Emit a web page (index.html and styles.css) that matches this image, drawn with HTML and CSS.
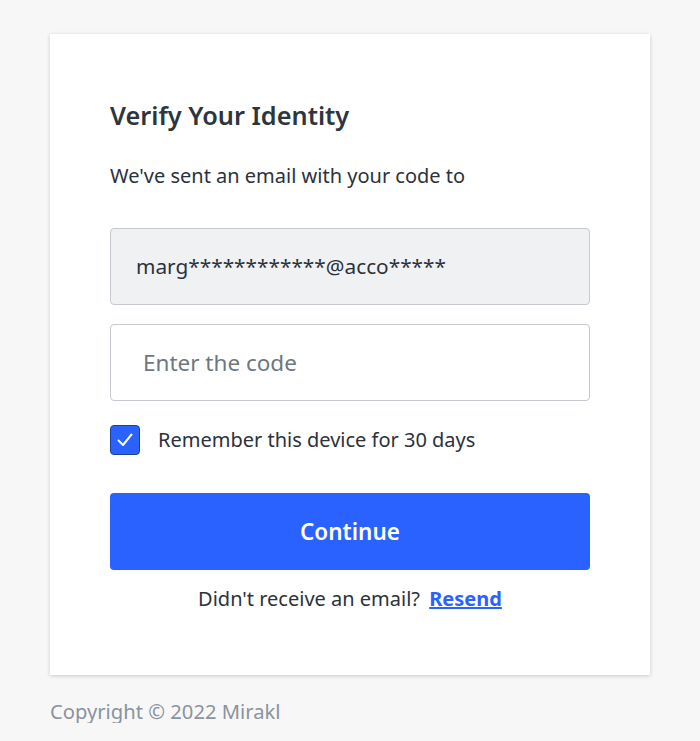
FILE: index.html
```html
<!DOCTYPE html>
<html lang="en">
<head>
  <meta charset="UTF-8" />
  <meta name="viewport" content="width=device-width, initial-scale=1.0"/>
  <title>Verify Your Identity</title>
  <link rel="stylesheet" href="styles.css">
</head>
<body>
  <div class="page">
    <div class="card">
      <h1>Verify Your Identity</h1>
      <p class="intro">We've sent an email with your code to</p>

      <div class="field field-readonly">marg************@acco*****</div>
      <input type="text" class="field field-code" placeholder="Enter the code">

      <label class="remember">
        <span class="checkbox">
          <svg width="20" height="20" viewBox="0 0 20 20"><path d="M3.5 10.5 L8 15 L16.5 4.5" fill="none" stroke="#fff" stroke-width="2" stroke-linecap="round" stroke-linejoin="round"/></svg>
        </span>
        Remember this device for 30 days
      </label>

      <button class="continue">Continue</button>

      <p class="resend">Didn't receive an email? <a href="#">Resend</a></p>
    </div>
    <p class="copyright">Copyright © 2022 Mirakl</p>
  </div>
</body>
</html>
```

FILE: styles.css
```css
body {
  margin: 0;
  font-family: "Noto Sans", "Open Sans", sans-serif;
  background-color: #f7f7f7;
  color: #2b323b;
}

.page {
  padding: 34px 50px 0;
}

.card {
  background: #fff;
  padding: 65px 60px 64px;
  box-shadow: 0 1px 4px rgba(0,0,0,0.18);
}

h1 {
  margin: 0;
  font-size: 25.3px;
  line-height: 32px;
  font-weight: 600;
  color: #2d3540;
}

.intro {
  margin: 33px 0 0;
  font-size: 20px;
  line-height: 24px;
}

.field {
  display: block;
  box-sizing: border-box;
  width: 100%;
  height: 77px;
  border: 1px solid #c5c9d0;
  border-radius: 4px;
  font-family: inherit;
  font-size: 20.8px;
}

.field-readonly {
  margin-top: 40px;
  background: #f0f1f3;
  padding: 0 25px;
  line-height: 75px;
  color: #2b323b;
}

.field-code {
  margin-top: 19px;
  padding: 0 32px;
  background: #fff;
  outline: none;
  font-size: 22.5px;
}

.field-code::placeholder {
  color: #6e7782;
}

.remember {
  display: flex;
  align-items: center;
  gap: 18px;
  margin-top: 24px;
  font-size: 20px;
  line-height: 30px;
  color: #2b323b;
}

.checkbox {
  display: flex;
  align-items: center;
  justify-content: center;
  box-sizing: border-box;
  width: 30px;
  height: 30px;
  background: #2962ff;
  border: 1px solid #1d3f99;
  border-radius: 4px;
}

.continue {
  display: block;
  width: 100%;
  height: 77px;
  margin-top: 38px;
  background-color: #2962ff;
  border: none;
  border-radius: 4px;
  color: #fff;
  font-family: inherit;
  font-size: 22.5px;
  font-weight: 600;
  cursor: pointer;
}

.resend {
  margin: 17px 0 0;
  text-align: center;
  font-size: 20px;
  line-height: 24px;
}

.resend a {
  margin-left: 4px;
  color: #2962ff;
  font-weight: 700;
}

.copyright {
  margin: 24px 0 0;
  font-size: 20.2px;
  line-height: 24px;
  color: #8a939e;
}
```
